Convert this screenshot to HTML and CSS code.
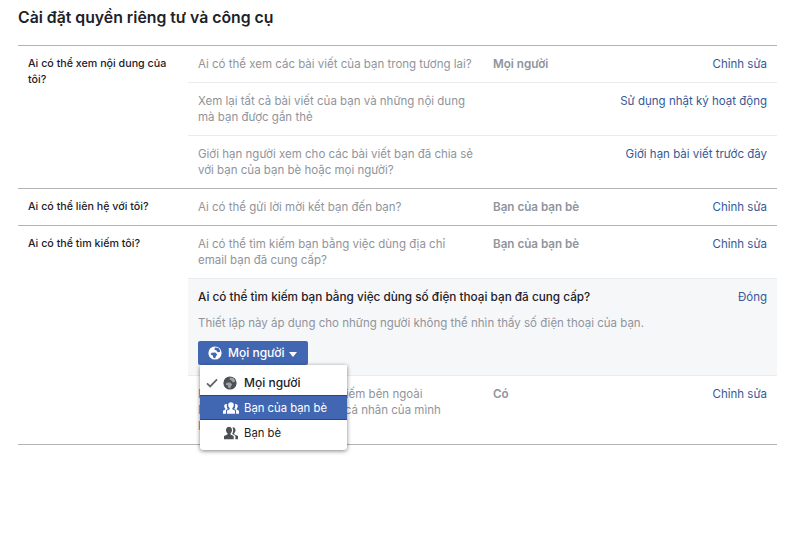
FILE: index.html
```html
<!DOCTYPE html>
<html lang="vi">
<head>
<meta charset="utf-8">
<title>Cài đặt quyền riêng tư và công cụ</title>
<link rel="stylesheet" href="styles.css">
</head>
<body>
<svg class="defs" width="0" height="0" aria-hidden="true">
  <symbol id="globe" viewBox="0 0 14 14">
    <circle cx="7" cy="7" r="6.6" fill="currentColor"/>
    <path class="land" d="M7 1.6 10.4 1.9 12.2 4.4 11.8 6 9.6 6.2 8.4 4.4 6.4 3.6ZM3.6 6.8 7.4 6.6 9.2 8.6 7.8 10.4 7.2 12.6 5.2 11.6 4.8 9.6 2.6 8.6Z"/>
  </symbol>
  <symbol id="fof" viewBox="0 0 16 12">
    <path d="M5.2 2.8c0-1.6 1.2-2.6 2.8-2.6s2.8 1 2.8 2.6c0 1.4-.7 2.7-1.5 3.2v1.2l2.7 1.4v3.2H4V8.6l2.7-1.4V6c-.8-.5-1.5-1.8-1.5-3.2Z"/>
    <path d="M3.4 1.9c-1.3 0-2.2.9-2.2 2.2 0 1.1.5 2.1 1.1 2.5v.9L0 8.8v2.9h3V8.1l1.8-1c-.6-.9-1-2-1-3.2 0-.7 0-1.3.2-1.7-.2-.2-.4-.3-.6-.3Z"/>
    <path d="M12.6 1.9c1.3 0 2.2.9 2.2 2.2 0 1.1-.5 2.1-1.1 2.5v.9L16 8.8v2.9h-3V8.1l-1.8-1c.6-.9 1-2 1-3.2 0-.7 0-1.3-.2-1.7.2-.2.4-.3.6-.3Z"/>
  </symbol>
  <symbol id="friends" viewBox="0 0 14 13">
    <path d="M2 3.4C2 1.5 3.3.2 5 .2s3 1.3 3 3.2c0 1.5-.7 2.9-1.5 3.4v1.1l3.2 1.7V13H0V9.6l3.5-1.7V6.8C2.7 6.3 2 4.900 2 3.4Z"/>
    <path d="M8.800.7c1.500 0 2.700 1.200 2.700 2.900 0 1.400-.6 2.700-1.400 3.200v1l3.900 1.800V13h-2.600V9.200L8.200 7.500c.6-1 1-2.400 1-3.900 0-1-.2-1.800-.7-2.700Z"/>
  </symbol>
</svg>

<main class="page">
  <h1 class="title">Cài đặt quyền riêng tư và công cụ</h1>
  <div class="settings">

    <section class="group">
      <h2 class="group-name">Ai có thể xem nội dung của tôi?</h2>
      <div class="rows">
        <div class="row">
          <p class="question">Ai có thể xem các bài viết của bạn trong tương lai?</p>
          <span class="value">Mọi người</span>
          <a class="action">Chỉnh sửa</a>
        </div>
        <div class="row">
          <p class="question">Xem lại tất cả bài viết của bạn và những nội dung<br>mà bạn được gắn thẻ</p>
          <span class="value"></span>
          <a class="action">Sử dụng nhật ký hoạt động</a>
        </div>
        <div class="row">
          <p class="question">Giới hạn người xem cho các bài viết bạn đã chia sẻ<br>với bạn của bạn bè hoặc mọi người?</p>
          <span class="value"></span>
          <a class="action">Giới hạn bài viết trước đây</a>
        </div>
      </div>
    </section>

    <section class="group">
      <h2 class="group-name">Ai có thể liên hệ với tôi?</h2>
      <div class="rows">
        <div class="row">
          <p class="question">Ai có thể gửi lời mời kết bạn đến bạn?</p>
          <span class="value">Bạn của bạn bè</span>
          <a class="action">Chỉnh sửa</a>
        </div>
      </div>
    </section>

    <section class="group">
      <h2 class="group-name">Ai có thể tìm kiếm tôi?</h2>
      <div class="rows">
        <div class="row">
          <p class="question">Ai có thể tìm kiếm bạn bằng việc dùng địa chỉ<br>email bạn đã cung cấp?</p>
          <span class="value">Bạn của bạn bè</span>
          <a class="action">Chỉnh sửa</a>
        </div>
        <div class="row panel">
          <div class="panel-head">
            <strong class="panel-title">Ai có thể tìm kiếm bạn bằng việc dùng số điện thoại bạn đã cung cấp?</strong>
            <a class="action">Đóng</a>
          </div>
          <p class="panel-note">Thiết lập này áp dụng cho những người không thể nhìn thấy số điện thoại của bạn.</p>
          <div class="picker">
            <button class="picker-btn" type="button">
              <svg class="icon-globe"><use href="#globe"/></svg>
              <span>Mọi người</span>
              <i class="caret"></i>
            </button>
            <ul class="menu">
              <li class="menu-item selected">
                <svg class="check" viewBox="0 0 12 10"><path d="M1 5.4 4.2 8.4 11 1.4"/></svg>
                <svg class="icon-globe"><use href="#globe"/></svg>
                <span>Mọi người</span>
              </li>
              <li class="menu-item active">
                <svg class="icon-fof"><use href="#fof"/></svg>
                <span>Bạn của bạn bè</span>
              </li>
              <li class="menu-item">
                <svg class="icon-friends"><use href="#friends"/></svg>
                <span>Bạn bè</span>
              </li>
            </ul>
          </div>
        </div>
        <div class="row">
          <p class="question">Bạn có muốn công cụ tìm kiếm bên ngoài<br>Facebook liên kết tới trang cá nhân của mình<br>không?</p>
          <span class="value">Có</span>
          <a class="action">Chỉnh sửa</a>
        </div>
      </div>
    </section>

  </div>
</main>
</body>
</html>
```

FILE: styles.css
```css
* { box-sizing: border-box; }

body {
  margin: 0;
  background: #fff;
  font-family: Inter, "Noto Sans", sans-serif;
  font-size: 11.5px;
  line-height: 16px;
  color: #1d2129;
}

.defs { position: absolute; }

.page {
  min-height: 533px;
  padding: 8px 18px 0;
}

.title {
  margin: 0 0 18px;
  font-size: 15.8px;
  line-height: 19px;
  font-weight: 600;
  color: #1d2129;
}

.settings { border-bottom: 1px solid #b3b3b3; }

.group {
  display: flex;
  border-top: 1px solid #b3b3b3;
}

.group-name {
  flex: 0 0 170px;
  margin: 0;
  padding: 10px 10px 0;
  font-size: 10.7px;
  line-height: 16px;
  font-weight: 500;
  color: #1d2129;
}

.rows { flex: 1; min-width: 0; }

.row {
  display: flex;
  padding: 10px;
  border-top: 1px solid #e9ebee;
}

.row:first-child { border-top: 0; }

.question {
  flex: 0 0 295px;
  margin: 0;
  color: #90949c;
}

.value {
  flex: 1;
  font-size: 11.65px;
  font-weight: 600;
  color: #90949c;
}

.action {
  color: #365899;
  white-space: nowrap;
}

.panel {
  display: block;
  height: 97px;
  background: #f6f7f9;
}

.panel-head {
  display: flex;
  justify-content: space-between;
}

.panel-title {
  font-size: 11.75px;
  font-weight: 500;
  color: #1d2129;
}

.panel-note {
  margin: 10px 0 10px;
  color: #90949c;
}

.picker { position: relative; }

.picker-btn {
  display: flex;
  align-items: center;
  width: 110px;
  height: 24px;
  padding: 0 0 0 10px;
  border: 0;
  border-radius: 2px;
  background: #4267b2;
  color: #fff;
  font: 500 12px/16px Inter, "Noto Sans", sans-serif;
}

.land { fill: var(--land); }

.picker-btn .icon-globe {
  --land: #4267b2;
  width: 14px;
  height: 14px;
  margin-right: 6px;
  color: #fff;
}

.caret {
  width: 0;
  height: 0;
  margin: 2px 0 0 5px;
  border: 4px solid transparent;
  border-top: 5px solid #fff;
  border-bottom: 0;
}

.menu {
  position: absolute;
  z-index: 2;
  top: 24px;
  left: 2px;
  width: 147px;
  margin: 0;
  padding: 5px 0;
  list-style: none;
  background: #fff;
  border-radius: 0 0 3px 3px;
  box-shadow: 0 1px 4px rgba(0, 0, 0, .5);
}

.menu-item {
  position: relative;
  display: flex;
  align-items: center;
  height: 25px;
  padding-left: 44px;
  font-size: 11.3px;
  color: #1d2129;
}

.menu-item svg {
  position: absolute;
  left: 23px;
  top: 50%;
  transform: translateY(-50%);
}

.menu-item.selected {
  font-size: 12px;
  font-weight: 500;
}

.menu-item .check {
  left: 6px;
  width: 12px;
  height: 10px;
  fill: none;
  stroke: #606770;
  stroke-width: 1.8;
}

.menu-item .icon-globe {
  --land: #9da0a5;
  width: 14px;
  height: 14px;
  color: #4b4f56;
}

.menu-item .icon-fof {
  left: 23px;
  width: 16px;
  height: 12px;
  fill: #fff;
}

.menu-item .icon-friends {
  left: 24px;
  width: 14px;
  height: 13px;
  fill: #4b4f56;
}

.menu-item.active {
  background: #4267b2;
  color: #fff;
  border-top: 1px solid #29487d;
  border-bottom: 1px solid #29487d;
}
```
